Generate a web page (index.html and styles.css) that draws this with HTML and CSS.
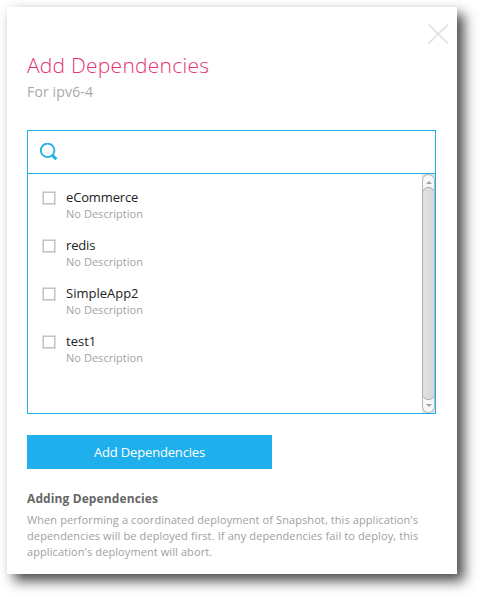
FILE: index.html
```html
<!DOCTYPE html>
<html lang="en">
<head>
<meta charset="utf-8">
<title>Add Dependencies</title>
<link rel="stylesheet" href="styles.css">
</head>
<body>
<main class="dialog">
  <svg class="close" width="22" height="22" viewBox="0 0 22 22"><path d="M2 2L20.5 20M20.5 2L2 20"/></svg>
  <h1 class="title">Add Dependencies</h1>
  <p class="subtitle">For ipv6-4</p>
  <section class="picker">
    <div class="search">
      <svg width="18" height="18" viewBox="0 0 18 18"><circle cx="7.6" cy="7.4" r="6.8"/><path class="handle" d="M11.8 11.8L16.3 16.3"/></svg>
    </div>
    <div class="body">
      <ul class="list">
        <li><span class="check"></span><div><div class="name tight">eCommerce</div><div class="desc">No Description</div></div></li>
        <li><span class="check"></span><div><div class="name tight">redis</div><div class="desc">No Description</div></div></li>
        <li><span class="check"></span><div><div class="name">SimpleApp2</div><div class="desc">No Description</div></div></li>
        <li><span class="check"></span><div><div class="name">test1</div><div class="desc">No Description</div></div></li>
      </ul>
      <div class="scrollbar">
        <div class="arrow up"><svg width="6" height="3" viewBox="0 0 6 3"><path d="M0 3L3 0L6 3Z"/></svg></div>
        <div class="thumb"></div>
        <div class="arrow down"><svg width="6" height="3" viewBox="0 0 6 3"><path d="M0 0L3 3L6 0Z"/></svg></div>
      </div>
    </div>
  </section>
  <button class="submit">Add Dependencies</button>
  <h2 class="help-title">Adding Dependencies</h2>
  <p class="help">When performing a coordinated deployment of Snapshot, this application's<br><span class="wide">dependencies will be deployed first. If any dependencies fail to deploy, this</span><br>application's deployment will abort.</p>
</main>
</body>
</html>
```
FILE: styles.css
```css
* { box-sizing: border-box; }
html, body { height: 100%; }
body {
  margin: 0;
  padding: 7px;
  overflow: hidden;
  background: #fff;
  font-family: "Open Sans", "Noto Sans", sans-serif;
}
.dialog {
  position: relative;
  width: 450px;
  height: 567px;
  padding: 44px 21px 0 20px;
  background: #fff;
  box-shadow: 7px 7px 12px rgba(0, 0, 0, 0.7), 0 0 8px rgba(0, 0, 0, 0.04);
}
.close { position: absolute; top: 16px; right: 8px; fill: none; stroke: #e4e4e4; stroke-width: 1.8; stroke-linecap: round; }
.title { margin: 0; font-size: 21px; font-weight: 300; line-height: 28px; letter-spacing: 0.24px; color: #e8336f; }
.subtitle { margin: 3px 0 0; font-size: 14px; line-height: 20px; letter-spacing: 0.15px; color: #a9a9a9; }
.picker { margin-top: 28px; height: 284px; border: 1px solid #1fafe9; }
.search { height: 43px; padding: 12px; border-bottom: 1px solid #1fafe9; }
.search svg { display: block; fill: none; stroke: #1fafe9; stroke-width: 1.8; }
.search .handle { stroke-width: 3; }
.body { display: flex; height: 239px; }
.list { flex: 1; margin: 0; padding: 14px 0 0 14px; list-style: none; }
.list li { display: flex; gap: 10px; height: 48px; }
.check { width: 14px; height: 14px; margin-top: 3px; border: 1px solid #dedede; box-shadow: inset 0 0 0 1px #c3c3c3; }
.name { font-size: 13px; line-height: 18px; color: #222; }
.tight { letter-spacing: -0.15px; }
.desc { margin-top: 1px; font-size: 11px; line-height: 14px; letter-spacing: 0.04px; color: #a3a3a3; }
.scrollbar { display: flex; flex-direction: column; width: 13px; background: #e4e3e1; }
.arrow { display: flex; align-items: center; justify-content: center; height: 17px; border: 1px solid #b9b7b4; background: #f7f7f6; }
.arrow svg { fill: #a5a3a0; }
.up { border-radius: 7px 7px 0 0; margin-bottom: -4px; border-bottom: 0; }
.down { border-radius: 0 0 7px 7px; margin-top: -4px; border-top: 0; }
.up svg { margin-top: -2px; }
.down svg { margin-top: 2px; }
.thumb { position: relative; flex: 1; border: 1px solid #b0aeaa; border-radius: 6px; background: linear-gradient(90deg, #e3e2e0, #d9d8d6); }
.submit { display: block; width: 245px; height: 34px; margin-top: 21px; padding: 0; border: 0; background: #1fafec; color: #fff; font: 13px "Open Sans", sans-serif; letter-spacing: -0.17px; }
.help-title { margin: 21px 0 0; font-size: 12px; line-height: 18px; font-weight: 700; letter-spacing: 0.11px; color: #666; }
.help { margin: 4px 0 0; font-size: 11px; line-height: 16px; letter-spacing: 0.09px; color: #a0a0a0; white-space: nowrap; }
.wide { letter-spacing: 0.12px; }
```
